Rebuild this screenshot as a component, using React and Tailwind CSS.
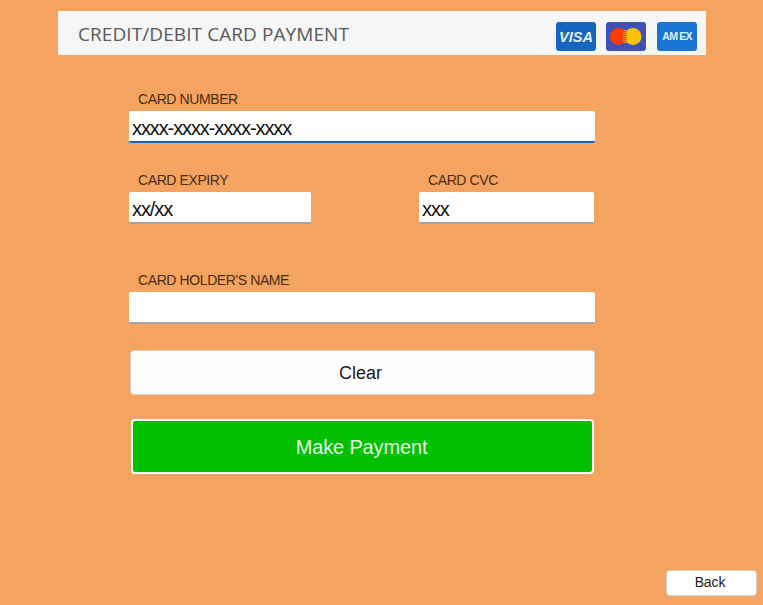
import React from 'react';

function VisaCard() {
  return (
    <svg width="40" height="29" viewBox="0 0 40 29" className="mr-[10px]">
      <rect width="40" height="29" rx="3" fill="#1565c0" />
      <path d="M3 9.5c3 0 5 1.2 6 4-1.5-2-3.200-3.200-6-4z" fill="#f9a825" />
      <text x="20" y="20" textAnchor="middle" fontFamily="Liberation Sans, sans-serif" fontSize="14.500" fontWeight="700" fontStyle="italic" fill="#e8f1fa">VISA</text>
    </svg>
  );
}

function MasterCard() {
  return (
    <svg width="40" height="29" viewBox="0 0 40 29" className="mr-[11px]">
      <rect width="40" height="29" rx="3" fill="#3f51b5" />
      <circle cx="27" cy="14.5" r="8.5" fill="#ffc107" />
      <circle cx="12.500" cy="14.5" r="8.5" fill="#ff3d00" />
      <path d="M17.500 8.500h3M17 10.500h4M17 12.500h4M17 14.500h4M17 16.500h4M17 18.500h4M17.500 20.500h3" stroke="#ff9800" strokeWidth="1" />
    </svg>
  );
}

function AmexCard() {
  return (
    <svg width="40" height="29" viewBox="0 0 40 29">
      <rect width="40" height="29" rx="3" fill="#1976d2" />
      <text x="20" y="17.500" textAnchor="middle" fontFamily="Liberation Sans, sans-serif" fontSize="10.500" fontWeight="700" letterSpacing="-0.8" fill="#e3effa">AM EX</text>
    </svg>
  );
}

function Field({ label, value, className, focused }) {
  return (
    <div className={className}>
      <div className="pl-[9px] h-[20px] text-[14px] leading-[17px] tracking-[-0.4px] text-[#4a2c12]">{label}</div>
      <input
        readOnly
        defaultValue={value}
        className={
          'block w-full h-[32px] bg-white rounded-[2px] outline-none pl-[3px] pt-[5px] text-[20px] tracking-[-1.1px] text-[#111] border-b-2 ' +
          (focused ? 'border-[#0a66c2]' : 'border-[#a8a29c]')
        }
      />
    </div>
  );
}

export default function App() {
  return (
    <div className="relative w-[763px] h-[605px] overflow-hidden bg-[#f4a460] font-['Liberation_Sans',sans-serif]">
      {/* Header bar */}
      <div className="ml-[58px] mt-[11px] w-[648px] h-[44px] bg-[#f6f6f6] flex items-center pl-[20px] pr-[9px]">
        <h1 className="font-['Open_Sans',sans-serif] text-[19px] tracking-[0.08px] pt-[3px] text-[#595959] font-normal flex-1">CREDIT/DEBIT CARD PAYMENT</h1>
        <div className="flex items-center mt-[6px]">
          <VisaCard />
          <MasterCard />
          <AmexCard />
        </div>
      </div>

      {/* Form */}
      <div className="ml-[129px] mt-[36px] w-[466px]">
        <Field label="CARD NUMBER" value="xxxx-xxxx-xxxx-xxxx" focused />

        <div className="mt-[29px] flex justify-between">
          <Field label="CARD EXPIRY" value="xx/xx" className="w-[182px]" />
          <Field label="CARD CVC" value="xxx" className="w-[175px] mr-px" />
        </div>

        <Field label="CARD HOLDER'S NAME" value="" className="mt-[48px]" />

        <button className="block mt-[26px] ml-px w-[465px] h-[45px] pr-[4px] pt-px bg-[#fdfdfd] border border-[#d4d0cc] rounded-[4px] text-[18px] tracking-[-0.05px] text-[#1a1a1a]">
          Clear
        </button>
        <button className="block mt-[24px] ml-[2px] w-[463px] h-[55px] pr-[2px] bg-[#00c000] border-2 border-white rounded-[4px] text-[20px] tracking-[-0.15px] text-[#e4f7e0]">
          Make Payment
        </button>
      </div>

      <button className="absolute left-[666px] top-[570px] w-[91px] h-[26px] pr-[3px] pb-[1px] bg-white border border-[#d4d0cc] rounded-[4px] text-[14px] tracking-[-0.1px] text-[#1a1a1a]">
        Back
      </button>
    </div>
  );
}
